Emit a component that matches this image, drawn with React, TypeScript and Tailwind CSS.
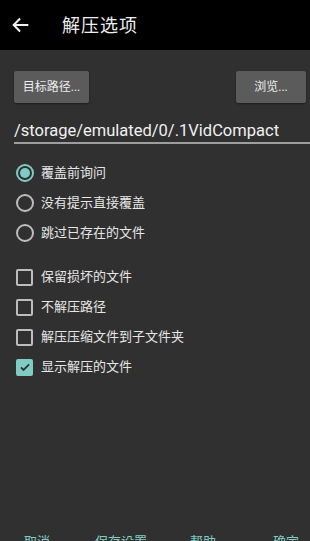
import { useState } from "react"

const font = { fontFamily: '"Roboto", "Noto Sans CJK SC", sans-serif' }

function Radio({ label, checked }: { label: string; checked?: boolean }) {
  return (
    <div className="flex items-center h-[30px]">
      <span
        className={`ml-[16px] w-[18px] h-[18px] rounded-full border-2 flex items-center justify-center ${
          checked ? "border-[#80cbc4]" : "border-[#bdbdbd]"
        }`}
      >
        {checked && <span className="w-[10px] h-[10px] rounded-full bg-[#80cbc4]" />}
      </span>
      <span className="ml-[7px] text-[13px] text-[#e6e6e6]">{label}</span>
    </div>
  )
}

function Check({ label, checked }: { label: string; checked?: boolean }) {
  return (
    <div className="flex items-center h-[30px]">
      <span
        className={`ml-[16px] w-[17px] h-[17px] rounded-[2px] flex items-center justify-center ${
          checked ? "bg-[#80cbc4]" : "border-2 border-[#bdbdbd]"
        }`}
      >
        {checked && (
          <svg viewBox="0 0 24 24" className="w-[14px] h-[14px]" fill="none" stroke="#303030" strokeWidth={3}>
            <path d="M5 12.5l4.5 4.5L19 7.5" />
          </svg>
        )}
      </span>
      <span className="ml-[8px] text-[13px] text-[#e6e6e6]">{label}</span>
    </div>
  )
}

export default function App() {
  const [path] = useState("/storage/emulated/0/.1VidCompact")

  return (
    <div className="w-[310px] h-[541px] bg-[#303030] flex flex-col overflow-hidden" style={font}>
      <div className="h-[50px] bg-black flex items-center shrink-0">
        <svg viewBox="0 0 24 24" className="ml-[10px] w-[22px] h-[22px]" fill="none" stroke="#f0f0f0" strokeWidth={2.2}>
          <path d="M20 12H5M11 5l-7 7 7 7" />
        </svg>
        <span className="ml-[30px] text-[18px] text-[#eeeeee] tracking-[1px]">解压选项</span>
      </div>

      <div className="flex justify-between items-center px-[14px] pt-[21px]">
        <button className="w-[75px] h-[32px] bg-[#5b5b5b] rounded-[2px] text-[12px] text-[#ececec] shadow-[0_1px_2px_rgba(0,0,0,0.4)]">
          目标路径...
        </button>
        <button className="w-[70px] h-[32px] bg-[#5b5b5b] rounded-[2px] text-[12px] text-[#ececec] mr-[-10px] shadow-[0_1px_2px_rgba(0,0,0,0.4)]">
          浏览...
        </button>
      </div>

      <div className="ml-[14px] mt-[18px] border-b-2 border-[#9e9e9e] pb-[1px] leading-[20px]">
        <span className="text-[16.5px] text-[#f0f0f0] leading-[20px]">{path}</span>
      </div>

      <div className="mt-[14px] flex flex-col">
        <Radio label="覆盖前询问" checked />
        <Radio label="没有提示直接覆盖" />
        <Radio label="跳过已存在的文件" />
      </div>

      <div className="mt-[14px] flex flex-col">
        <Check label="保留损坏的文件" />
        <Check label="不解压路径" />
        <Check label="解压压缩文件到子文件夹" />
        <Check label="显示解压的文件" checked />
      </div>

      <div className="flex-1" />

      <div className="flex h-[6px] text-[13px] text-[#80cbc4] leading-[13px] shrink-0 overflow-visible">
        <span className="ml-[24px]">取消</span>
        <span className="ml-[45px]">保存设置</span>
        <span className="ml-[43px]">帮助</span>
        <span className="ml-[57px]">确定</span>
      </div>
    </div>
  )
}
